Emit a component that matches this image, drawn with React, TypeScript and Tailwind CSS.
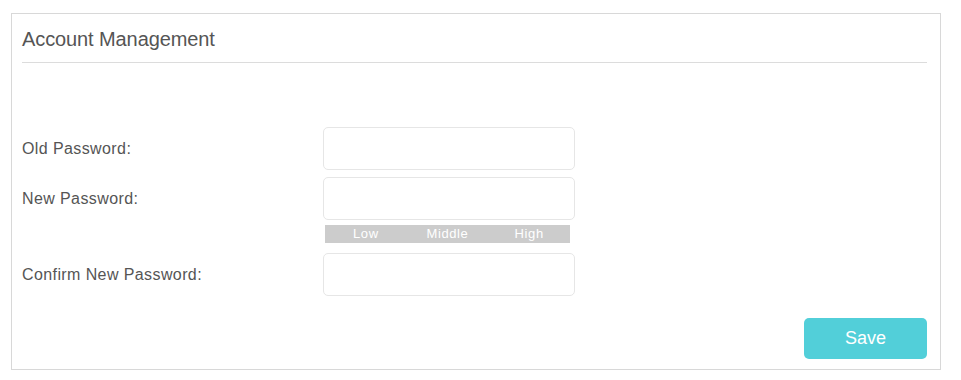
const strengthLevels = ['Low', 'Middle', 'High'];

function Field({ label }: { label: string }) {
  return (
    <div className="flex items-center">
      <label className="w-[301px] text-[16px] tracking-[0.4px] text-[#555]">{label}</label>
      <input
        type="password"
        className="h-[43px] w-[252px] rounded-[5px] border border-[#e6e6e6] bg-white px-2 outline-none"
      />
    </div>
  );
}

export default function App() {
  return (
    <div
      className="h-[380px] w-[961px] bg-white pl-[11px] pt-[13px]"
      style={{ fontFamily: '"Liberation Sans", Arial, sans-serif' }}
    >
      <div className="flex h-[357px] w-[930px] flex-col border border-[#d8d8d8] pb-[10px] pl-[10px] pr-[13px]">
        {/* Header */}
        <div className="h-[49px] border-b border-[#dcdcdc] pt-[14px] text-[20px] leading-[23px] tracking-[-0.1px] text-[#555]">
          Account Management
        </div>

        {/* Form */}
        <div className="mt-[64px] flex flex-col">
          <Field label="Old Password:" />
          <div className="mt-[7px]">
            <Field label="New Password:" />
          </div>
          <div className="ml-[303px] mt-[5px] grid h-[18px] w-[245px] grid-cols-3 bg-[#cccccc] text-[13px] leading-[18px] tracking-[0.6px] text-white">
            {strengthLevels.map((level) => (
              <span key={level} className="text-center">
                {level}
              </span>
            ))}
          </div>
          <div className="mt-[10px]">
            <Field label="Confirm New Password:" />
          </div>
        </div>

        {/* Save */}
        <div className="mt-auto flex justify-end">
          <button className="h-[41px] w-[123px] rounded-[5px] bg-[#52cfd9] text-[18px] text-white">
            Save
          </button>
        </div>
      </div>
    </div>
  );
}
